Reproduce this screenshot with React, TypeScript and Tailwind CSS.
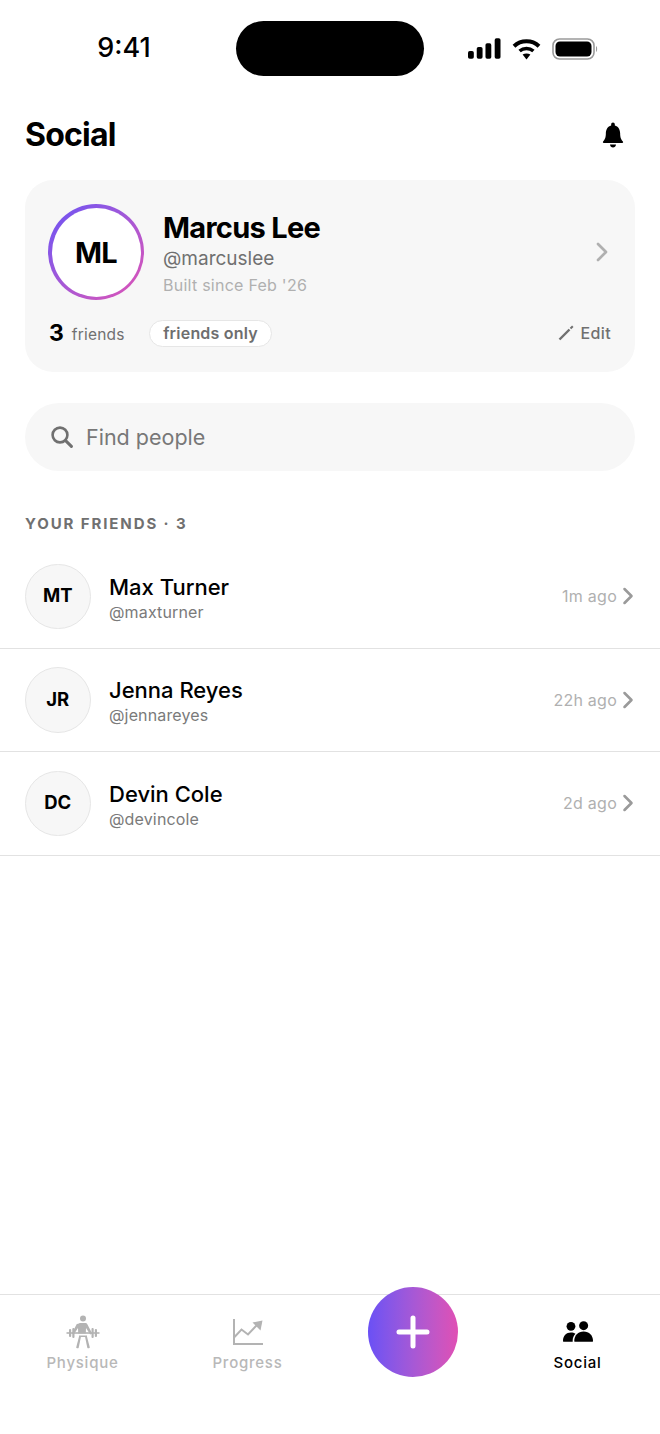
import { ChevronRight } from 'lucide-react';

const friends = [
  { initials: 'MT', name: 'Max Turner', handle: '@maxturner', seen: '1m ago' },
  { initials: 'JR', name: 'Jenna Reyes', handle: '@jennareyes', seen: '22h ago' },
  { initials: 'DC', name: 'Devin Cole', handle: '@devincole', seen: '2d ago' },
];

const StatusIcons = () => (
  <div className="flex items-center">
    <svg width="33" height="21" viewBox="0 0 34 21" className="mr-[11px]" fill="#000">
      <rect x="0" y="13" width="6" height="8" rx="1.8" />
      <rect x="9" y="9" width="6" height="12" rx="1.8" />
      <rect x="18" y="5" width="6" height="16" rx="1.8" />
      <rect x="27.5" y="0" width="6" height="21" rx="1.8" />
    </svg>
    <svg width="29" height="22" viewBox="0 0 29 22" className="mr-[11px]" fill="none" stroke="#000">
      <path d="M2 8.2 C9 1.6 20 1.6 27 8.2" strokeWidth="4" />
      <path d="M7.6 13 C11.6 9.6 17.4 9.6 21.4 13" strokeWidth="3.6" />
      <path d="M10.6 16.6 L14.5 21.6 L18.4 16.6 C16 15 13 15 10.6 16.6Z" fill="#000" stroke="none" />
    </svg>
    <svg width="46" height="22" viewBox="0 0 46 22" fill="none">
      <rect x="1" y="1" width="41" height="20" rx="6.5" stroke="#9a9a9a" strokeWidth="1.6" />
      <rect x="3.5" y="3.5" width="36" height="15" rx="4.5" fill="#000" />
      <path d="M44 8 C45.5 8.6 45.5 13.4 44 14Z" fill="#9a9a9a" />
    </svg>
  </div>
);

const BellIcon = () => (
  <svg width="22" height="26" viewBox="0 0 24 26" preserveAspectRatio="none" fill="#000">
    <path d="M12 0.5c1.2 0 2 .9 2 2v.9c3.7.9 5.8 4 5.8 7.9 0 4.4 1 6.1 3 8.2.5.6.2 1.5-.7 1.5H1.9c-.9 0-1.2-.9-.7-1.5 2-2.1 3-3.8 3-8.2 0-3.9 2.1-7 5.8-7.9v-.9c0-1.1.8-2 2-2z" />
    <path d="M8.7 22.5h6.6c-.2 1.8-1.6 3-3.3 3s-3.1-1.2-3.3-3z" />
  </svg>
);

const SearchIcon = () => (
  <svg width="22" height="22" viewBox="0 0 22 22" fill="none" stroke="#707070" strokeWidth="2.6" strokeLinecap="round">
    <circle cx="9" cy="9" r="7.4" />
    <path d="M14.6 14.6L20.4 20.4" strokeWidth="3" />
  </svg>
);

const LifterIcon = () => (
  <svg width="34" height="34" viewBox="0 0 34 34" fill="#b3b3b3">
    <circle cx="17" cy="3.5" r="3" />
    <path d="M14.5 8h5c.8 0 1.4.4 1.7 1.1l5 9.4-2 1-4.2-6.5-.2 5.500h-7.600l-.2-5.500-4.200 6.500-2-1 5-9.400C13.100 8.400 13.700 8 14.500 8z" />
    <path d="M13 21.500h2l-2.300 11.300c-.3.900-2.600.6-2.500-.2z" />
    <path d="M19 21.500h2l2.800 11.100c.1.800-2.200 1.100-2.500.2z" />
    <path d="M13 20.500h8v1.500h-8z" />
    <rect x="0.5" y="17.200" width="33" height="1.600" />
    <rect x="3" y="14" width="2.200" height="8" rx="1" />
    <rect x="6.300" y="13" width="2.200" height="10" rx="1" />
    <rect x="25.500" y="13" width="2.200" height="10" rx="1" />
    <rect x="28.800" y="14" width="2.200" height="8" rx="1" />
  </svg>
);

const ChartIcon = () => (
  <svg width="30" height="26" viewBox="0 0 30 26" fill="none" stroke="#b3b3b3" strokeWidth="2">
    <path d="M1 0v25h29" />
    <path d="M1.500 18l7-7.500 6.500 5 8.500-9" />
    <path d="M19.500 3.500L29.500 1.500 27.500 11.500z" fill="#b3b3b3" stroke="none" />
  </svg>
);

const PeopleIcon = () => (
  <svg width="30" height="21" viewBox="0 0 32 22" fill="#000">
    <circle cx="8.5" cy="5.500" r="4.700" />
    <circle cx="22" cy="4.800" r="4.800" />
    <path d="M0 21c0-5.500 3.500-9 8.500-9 1.900 0 3.500.5 4.800 1.400C11.300 15.300 10.300 18 10.300 21c0 .4 0 .7.1 1H1c-.6 0-1-.4-1-1z" />
    <path d="M12 21c0-5.600 4-10 10-10s10 4.400 10 10c0 .6-.4 1-1 1H13c-.6 0-1-.4-1-1z" />
  </svg>
);

export default function App() {
  return (
    <div className="w-[660px] h-[1434px] bg-white flex flex-col font-['Inter',sans-serif] text-black">
      {/* status bar */}
      <div className="h-[96px] pt-[21px] flex px-[63px] items-start">
        <div className="w-[122px] h-[55px] flex items-center justify-center text-[27px] font-medium">9:41</div>
        <div className="ml-[51px] w-[188px] h-[55px] rounded-full bg-black" />
        <div className="ml-auto w-[130px] h-[55px] flex items-center justify-end -mr-[1px]">
          <StatusIcons />
        </div>
      </div>

      <main className="flex-1 flex flex-col">
        <div className="h-[84px] pb-[6px] px-[25px] flex items-center justify-between">
          <h1 className="text-[32px] font-bold tracking-[-0.8px]">Social</h1>
          <div className="mr-[11px]"><BellIcon /></div>
        </div>

        {/* profile card */}
        <section className="mx-[25px] h-[192px] rounded-[28px] bg-[#f7f7f7] pl-[23px] pr-[24px] pt-[24px]">
          <div className="flex items-center">
            <div className="w-[96px] h-[96px] rounded-full bg-linear-to-br from-[#6a50f5] to-[#e04fb4] p-[3.5px] shrink-0">
              <div className="w-full h-full rounded-full bg-white flex items-center justify-center pt-[1px] text-[29px] font-bold tracking-[-0.7px]">ML</div>
            </div>
            <div className="ml-[19px] flex-1">
              <div className="text-[29px] leading-[36px] mt-[2px] font-bold tracking-[-0.7px]">Marcus Lee</div>
              <div className="text-[19px] leading-[26px] text-[#707070]">@marcuslee</div>
              <div className="text-[16px] leading-[22px] mt-[2px] tracking-[0.25px] text-[#b0b0b0]">Built since Feb '26</div>
            </div>
            <ChevronRight size={32} strokeWidth={2} className="text-[#b0b0b0] -mr-[7px]" />
          </div>
          <div className="mt-[16px] flex items-center">
            <span className="text-[23px] font-bold ml-[1px]">3</span>
            <span className="text-[15.5px] ml-[8px] mt-[3px] tracking-[0.2px] text-[#707070]">friends</span>
            <span className="ml-[24.5px] h-[27px] px-[13px] rounded-full bg-white border border-[#e6e6e6] flex items-center text-[16px] font-semibold tracking-[0.2px] text-[#6e6e6e]">friends only</span>
            <span className="ml-auto flex items-center gap-[6px] text-[16px] font-medium tracking-[0.4px] text-[#707070]">
              <svg width="16" height="16" viewBox="0 0 16 16" fill="none" stroke="#707070">
                <path d="M1.5 14.500L11.500 4.500" strokeWidth="2.400" />
                <path d="M12.500 3.500L14.800 1.200" strokeWidth="2" />
              </svg>
              Edit
            </span>
          </div>
        </section>

        {/* search */}
        <div className="mx-[25px] mt-[31px] h-[68px] rounded-full bg-[#f7f7f7] px-[26px] flex items-center">
          <SearchIcon />
          <span className="ml-[13px] text-[21.5px] text-[#787878]">Find people</span>
        </div>

        <div className="mt-[43px] px-[25px] text-[15px] leading-[20px] font-bold tracking-[1.9px] text-[#707070]">YOUR FRIENDS · 3</div>

        <ul className="mt-[11px]">
          {friends.map((f) => (
            <li key={f.initials} className="h-[103.5px] border-b border-[#e2e2e2] px-[25px] flex items-center">
              <div className="w-[65.5px] h-[65.5px] rounded-full bg-[#f7f7f7] border border-[#e6e6e6] flex items-center justify-center text-[18.5px] font-bold">
                {f.initials}
              </div>
              <div className="ml-[18.5px] flex-1 pt-[3px]">
                <div className="text-[22px] leading-[28px] font-medium">{f.name}</div>
                <div className="text-[16px] leading-[22px] text-[#7a7a7a] tracking-[0.15px]">{f.handle}</div>
              </div>
              <span className="text-[16px] text-[#b0b0b0] tracking-[0.25px]">{f.seen}</span>
              <ChevronRight size={28} strokeWidth={2.2} className="text-[#9a9a9a] -mr-[7px] ml-[-3px]" />
            </li>
          ))}
        </ul>
      </main>

      {/* bottom tabs */}
      <nav className="h-[140px] border-t border-[#e2e2e2] grid grid-cols-4 relative">
        <div className="flex flex-col items-center pt-[20px]">
          <LifterIcon />
          <span className="mt-[3px] text-[15px] font-medium tracking-[0.75px] text-[#b8b8b8]">Physique</span>
        </div>
        <div className="flex flex-col items-center pt-[24px]">
          <ChartIcon />
          <span className="mt-[7px] text-[15px] font-medium tracking-[0.75px] text-[#b8b8b8]">Progress</span>
        </div>
        <div className="flex justify-center">
          <div className="w-[90px] h-[90px] -mt-[8px] rounded-full bg-linear-to-r from-[#6a50f5] to-[#e04fb4] flex items-center justify-center">
            <svg width="34" height="34" viewBox="0 0 34 34" stroke="#fff" strokeWidth="5" strokeLinecap="round">
              <path d="M17 3v28M3 17h28" />
            </svg>
          </div>
        </div>
        <div className="flex flex-col items-center pt-[26px]">
          <PeopleIcon />
          <span className="mt-[10px] text-[15px] font-medium tracking-[0.75px]">Social</span>
        </div>
      </nav>
    </div>
  );
}
